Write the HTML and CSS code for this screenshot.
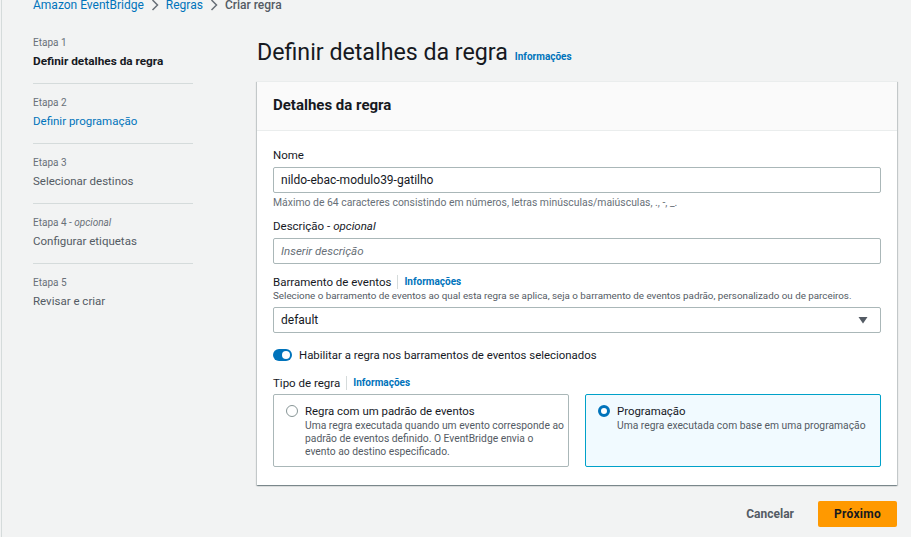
FILE: index.html
```html
<!DOCTYPE html>
<html lang="pt-BR">
<head>
<meta charset="utf-8">
<title>Criar regra</title>
<link rel="stylesheet" href="styles.css">
</head>
<body>
<div class="page">
  <nav class="crumbs">
    <a class="crumb-link">Amazon EventBridge</a>
    <svg class="chev" width="8" height="12" viewBox="0 0 8 12"><path d="M1.5 1 L6.5 6 L1.5 11" fill="none" stroke="#687078" stroke-width="1.5"/></svg>
    <a class="crumb-link">Regras</a>
    <svg class="chev" width="8" height="12" viewBox="0 0 8 12"><path d="M1.5 1 L6.5 6 L1.5 11" fill="none" stroke="#687078" stroke-width="1.5"/></svg>
    <span class="crumb-current">Criar regra</span>
  </nav>
  <div class="layout">
    <aside class="steps">
      <div class="step">
        <div class="step-label">Etapa 1</div>
        <div class="step-title active">Definir detalhes da regra</div>
      </div>
      <div class="step">
        <div class="step-label">Etapa 2</div>
        <div class="step-title link">Definir programação</div>
      </div>
      <div class="step">
        <div class="step-label">Etapa 3</div>
        <div class="step-title">Selecionar destinos</div>
      </div>
      <div class="step">
        <div class="step-label">Etapa 4 - <i>opcional</i></div>
        <div class="step-title">Configurar etiquetas</div>
      </div>
      <div class="step last">
        <div class="step-label">Etapa 5</div>
        <div class="step-title">Revisar e criar</div>
      </div>
    </aside>
    <main class="main">
      <h1 class="page-title"><span>Definir detalhes da regra</span><span class="info">Informações</span></h1>
      <section class="card">
        <header class="card-header">Detalhes da regra</header>
        <div class="card-body">
          <div class="field f-name">
            <label class="label">Nome</label>
            <div class="input">nildo-ebac-modulo39-gatilho</div>
            <div class="hint">Máximo de 64 caracteres consistindo em números, letras minúsculas/maiúsculas, ., -, _.</div>
          </div>
          <div class="field f-desc">
            <label class="label">Descrição - <i>opcional</i></label>
            <div class="input placeholder">Inserir descrição</div>
          </div>
          <div class="field f-bus">
            <label class="label">Barramento de eventos <span class="sep"></span><span class="info">Informações</span></label>
            <div class="desc">Selecione o barramento de eventos ao qual esta regra se aplica, seja o barramento de eventos padrão, personalizado ou de parceiros.</div>
            <div class="input select">
              <span>default</span>
              <svg width="10" height="8" viewBox="0 0 10 8"><path d="M0.5 1 L9.5 1 L5 7.5 Z" fill="#545b64"/></svg>
            </div>
          </div>
          <div class="toggle-row">
            <span class="toggle"><span class="knob"></span></span>
            <span>Habilitar a regra nos barramentos de eventos selecionados</span>
          </div>
          <div class="field f-type">
            <label class="label">Tipo de regra <span class="sep"></span><span class="info">Informações</span></label>
            <div class="tiles">
              <div class="tile">
                <span class="radio"></span>
                <div class="tile-text">
                  <div class="tile-title">Regra com um padrão de eventos</div>
                  <div class="tile-desc">Uma regra executada quando um evento corresponde ao<br>padrão de eventos definido. O EventBridge envia o<br>evento ao destino especificado.</div>
                </div>
              </div>
              <div class="tile selected">
                <span class="radio checked"></span>
                <div class="tile-text">
                  <div class="tile-title">Programação</div>
                  <div class="tile-desc">Uma regra executada com base em uma programação</div>
                </div>
              </div>
            </div>
          </div>
        </div>
      </section>
      <div class="actions">
        <button class="btn-link">Cancelar</button>
        <button class="btn-primary">Próximo</button>
      </div>
    </main>
  </div>
</div>
</body>
</html>
```

FILE: styles.css
```css
* { box-sizing: border-box; }
html, body { margin: 0; padding: 0; }
body {
  background: #f2f3f3;
  font-family: Roboto, "Liberation Sans", sans-serif;
  color: #16191f;
  font-size: 12px;
  overflow: hidden;
}
.page {
  margin-left: 1px;
  border-left: 1px solid #d5dbdb;
  min-height: 560px;
  padding-left: 31px;
}
.crumbs {
  display: flex;
  align-items: center;
  gap: 6px;
  height: 20px;
  margin-top: -5px;
  font-size: 12px;
}
.crumb-link { color: #0073bb; }
.crumb-current { color: #545b64; font-weight: 500; }
.chev { margin: 0 1px; }
.layout {
  display: flex;
  margin-top: 20px;
}
.steps {
  width: 160px;
  flex: none;
}
.step {
  padding: 11px 0 13px;
  border-bottom: 1px solid #d5dbdb;
}
.step:first-child { padding-top: 0; }
.step.last { border-bottom: none; }
.step-label {
  font-size: 10px;
  line-height: 15px;
  color: #687078;
}
.step-title {
  margin-top: 2px;
  font-size: 11.5px;
  line-height: 18px;
  color: #545b64;
}
.step-title.active { color: #16191f; font-weight: 700; font-size: 11.8px; }
.step-title.link { color: #0073bb; }
.main {
  margin-left: 64px;
  width: 640px;
  margin-top: 2px;
}
.page-title {
  margin: 0;
  display: flex;
  align-items: baseline;
  gap: 7px;
  height: 30px;
  font-size: 23.2px;
  line-height: 30px;
  font-weight: 400;
  color: #16191f;
}
.info {
  font-size: 10px;
  font-weight: 700;
  color: #0073bb;
}
.card {
  margin-top: 14px;
  background: #fff;
  box-shadow: 0 1px 1px 0 rgba(0, 28, 36, 0.3), 1px 1px 1px 0 rgba(0, 28, 36, 0.15), -1px 1px 1px 0 rgba(0, 28, 36, 0.15);
  border-top: 1px solid #eaeded;
}
.card-header {
  background: #fafafa;
  border-bottom: 1px solid #eaeded;
  padding: 14px 16px 16px;
  font-size: 15px;
  line-height: 18px;
  font-weight: 700;
}
.card-body {
  padding: 16px 16px 18px;
}
.f-desc { margin-top: 8px; }
.f-bus { margin-top: 10px; }
.f-type { margin-top: 11px; }
.label {
  display: flex;
  align-items: center;
  font-size: 11.5px;
  line-height: 16px;
  color: #16191f;
}
.label i { margin-left: 3px; }
.sep {
  display: inline-block;
  width: 1px;
  height: 14px;
  background: #d5dbdb;
  margin: 0 6px;
}
.input {
  margin-top: 4px;
  height: 26px;
  border: 1px solid #aab7b8;
  border-radius: 2px;
  padding: 0 7px;
  display: flex;
  align-items: center;
  font-size: 12px;
  color: #16191f;
}
.input.placeholder { color: #687078; font-style: italic; font-size: 11.5px; }
.hint {
  margin-top: 3px;
  font-size: 10.4px;
  line-height: 14px;
  color: #687078;
}
.desc {
  margin-top: -1px;
  font-size: 9.8px;
  line-height: 14px;
  color: #545b64;
}
.select { justify-content: space-between; padding-right: 12px; }
.toggle-row {
  display: flex;
  align-items: center;
  gap: 7px;
  margin-top: 13px;
  line-height: 18px;
  font-size: 11.4px;
  color: #16191f;
}
.toggle {
  width: 19px;
  height: 12px;
  border-radius: 6px;
  background: #0073bb;
  position: relative;
}
.knob {
  position: absolute;
  right: 2px;
  top: 2px;
  width: 8px;
  height: 8px;
  border-radius: 50%;
  background: #fff;
}
.tiles {
  margin-top: 3px;
  display: grid;
  grid-template-columns: 1fr 1fr;
  gap: 16px;
}
.tile {
  border: 1px solid #aab7b8;
  border-radius: 2px;
  padding: 8px 2px 8px 12px;
  display: flex;
  gap: 7px;
  height: 73px;
}
.tile.selected {
  background: #f1faff;
  border-color: #00a1c9;
}
.radio {
  flex: none;
  width: 12px;
  height: 12px;
  margin-top: 2px;
  border-radius: 50%;
  border: 1px solid #879596;
  background: #fff;
}
.radio.checked {
  border: 3.5px solid #0073bb;
}
.tile-title {
  font-size: 11.4px;
  line-height: 16px;
  color: #16191f;
}
.tile-desc {
  font-size: 10.3px;
  line-height: 13px;
  color: #545b64;
  white-space: nowrap;
}
.actions {
  display: flex;
  justify-content: flex-end;
  align-items: center;
  gap: 24px;
  margin-top: 16px;
}
.btn-link {
  border: none;
  background: none;
  font-family: inherit;
  font-size: 12px;
  font-weight: 700;
  color: #545b64;
  padding: 0;
}
.btn-primary {
  border: none;
  background: #ff9900;
  border-radius: 2px;
  height: 26px;
  width: 79px;
  font-family: inherit;
  font-size: 12px;
  font-weight: 700;
  color: #16191f;
  letter-spacing: 0.3px;
}
```
